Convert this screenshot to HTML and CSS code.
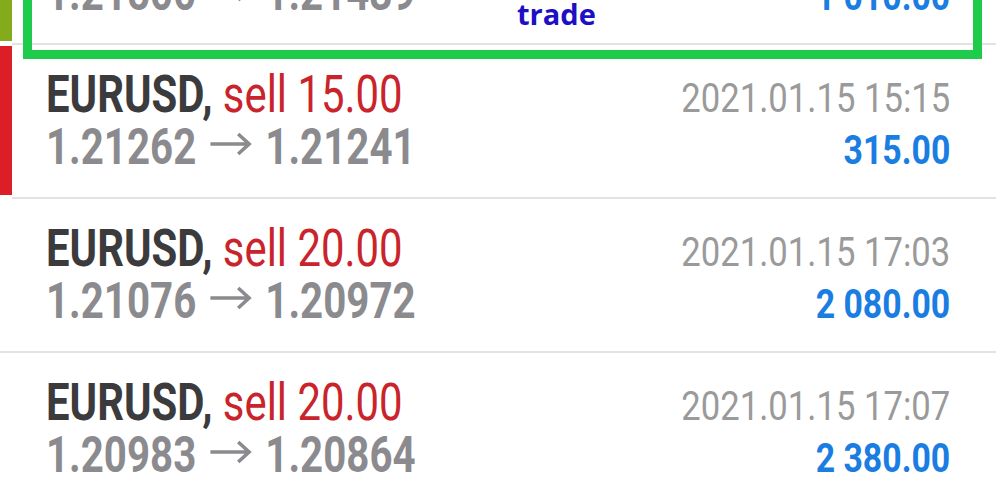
FILE: index.html
```html
<!DOCTYPE html>
<html lang="en">
<head>
    <meta charset="UTF-8">
    <meta name="viewport" content="width=device-width, initial-scale=1.0">
    <title>History</title>
    <link rel="stylesheet" href="styles.css">
</head>
<body>
    <main class="deals">
        <div class="deal deal--win">
            <div class="deal__bar"></div>
            <div class="deal__body">
                <div class="deal__line">
                    <span class="deal__title"><b>EURUSD,</b> <span class="deal__type">sell 20.00</span></span>
                    <span class="deal__time">2021.01.15 14:52</span>
                </div>
                <div class="deal__line">
                    <span class="deal__price">1.21500 <svg class="arrow" width="53" height="24" viewBox="0 0 43 24" preserveAspectRatio="none"><path d="M1 12H40M29 2L40 12L29 22"/></svg> 1.21439</span>
                    <span class="deal__profit">1 010.00</span>
                </div>
            </div>
            <!-- 강조 표시 -->
            <div class="note">
                <span class="note__text">trade</span>
            </div>
        </div>
        <div class="deal deal--loss">
            <div class="deal__bar"></div>
            <div class="deal__body">
                <div class="deal__line">
                    <span class="deal__title"><b>EURUSD,</b> <span class="deal__type">sell 15.00</span></span>
                    <span class="deal__time">2021.01.15 15:15</span>
                </div>
                <div class="deal__line">
                    <span class="deal__price">1.21262 <svg class="arrow" width="53" height="24" viewBox="0 0 43 24" preserveAspectRatio="none"><path d="M1 12H40M29 2L40 12L29 22"/></svg> 1.21241</span>
                    <span class="deal__profit">315.00</span>
                </div>
            </div>
        </div>
        <div class="deal deal--plain">
            <div class="deal__body">
                <div class="deal__line">
                    <span class="deal__title"><b>EURUSD,</b> <span class="deal__type">sell 20.00</span></span>
                    <span class="deal__time">2021.01.15 17:03</span>
                </div>
                <div class="deal__line">
                    <span class="deal__price">1.21076 <svg class="arrow" width="53" height="24" viewBox="0 0 43 24" preserveAspectRatio="none"><path d="M1 12H40M29 2L40 12L29 22"/></svg> 1.20972</span>
                    <span class="deal__profit">2 080.00</span>
                </div>
            </div>
        </div>
        <div class="deal deal--plain">
            <div class="deal__body">
                <div class="deal__line">
                    <span class="deal__title"><b>EURUSD,</b> <span class="deal__type">sell 20.00</span></span>
                    <span class="deal__time">2021.01.15 17:07</span>
                </div>
                <div class="deal__line">
                    <span class="deal__price">1.20983 <svg class="arrow" width="53" height="24" viewBox="0 0 43 24" preserveAspectRatio="none"><path d="M1 12H40M29 2L40 12L29 22"/></svg> 1.20864</span>
                    <span class="deal__profit">2 380.00</span>
                </div>
            </div>
        </div>
    </main>
</body>
</html>
```

FILE: styles.css
```css
* {
    box-sizing: border-box;
}
html,
body {
    overflow: hidden;
}
body {
    margin: 0;
    padding: 0;
    background: #fff;
    font-family: Roboto, "Liberation Sans", sans-serif;
}
.deals {
    margin-top: -109px;
}
.deal {
    position: relative;
    display: flex;
    height: 154px;
}
.deal__bar {
    width: 12px;
    flex-shrink: 0;
    margin: 1px 0 4px;
}
.deal--win .deal__bar {
    background: #84ab1c;
}
.deal--loss .deal__bar {
    background: #dc1f26;
}
.deal__body {
    flex: 1;
    padding: 23px 46px 0 34px;
    border-bottom: 2px solid #e2e2e2;
}
.deal--plain .deal__body {
    padding-left: 46px;
}
.deal__line {
    height: 53px;
    display: flex;
    justify-content: space-between;
    align-items: baseline;
}
.deal__title,
.deal__price,
.deal__time,
.deal__profit {
    display: inline-block;
    white-space: nowrap;
    line-height: 53px;
}
/* 폰트가 없어서 가로로 줄여서 condensed 느낌 */
.deal__title,
.deal__price {
    transform: scaleX(0.805);
    transform-origin: left;
}
.deal__time,
.deal__profit {
    transform: scaleX(0.845);
    transform-origin: right;
}
.deal__title {
    font-size: 52px;
    color: #3b3b3d;
}
.deal__title b {
    font-weight: 700;
}
.deal__type {
    color: #c9242b;
}
.deal__price {
    font-size: 50px;
    font-weight: 700;
    color: #8b8b8f;
}
.arrow {
    margin: 0 4px;
    vertical-align: 8px;
    fill: none;
    stroke: #8b8b8f;
    stroke-width: 3.6;
}
.deal__time {
    font-size: 41px;
    color: #9a9a9a;
}
.deal__profit {
    font-size: 40px;
    font-weight: 700;
    color: #1a7de2;
}
.note {
    position: absolute;
    top: 20px;
    left: 23px;
    right: 14px;
    bottom: -14px;
    border: 9px solid #1ecb4a;
}
.note__text {
    position: absolute;
    left: 485px;
    bottom: 22px;
    font-family: "Open Sans", sans-serif;
    font-size: 29px;
    line-height: 29px;
    font-weight: 700;
    color: #1d0fc6;
}
```
